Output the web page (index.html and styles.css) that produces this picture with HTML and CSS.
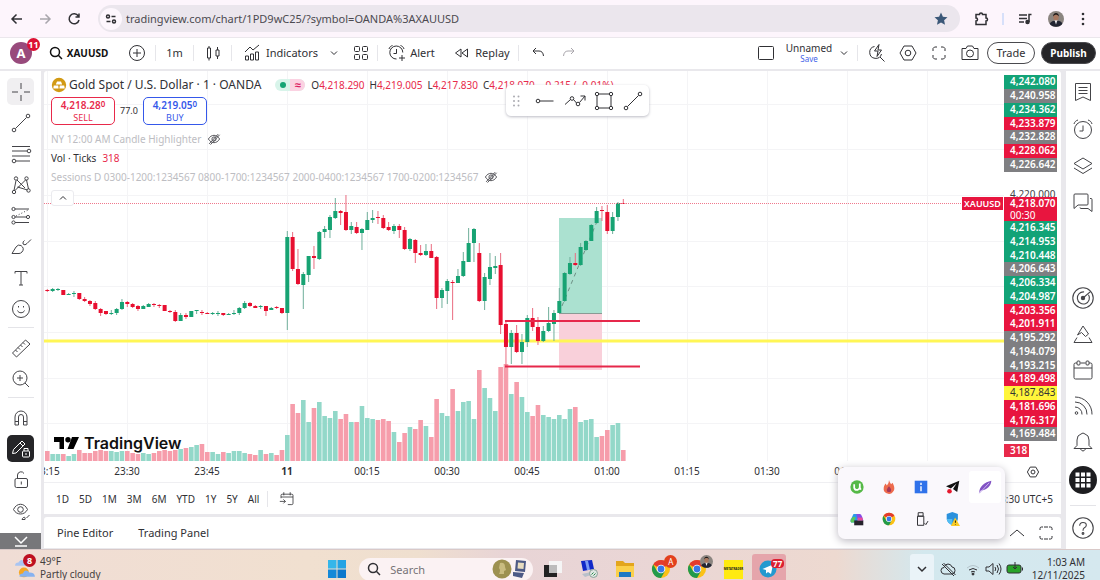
FILE: index.html
```html
<!DOCTYPE html>
<html lang="en">
<head>
<meta charset="utf-8">
<title>XAUUSD chart</title>
<link rel="stylesheet" href="styles.css">
</head>
<body>
<svg class="sprite" aria-hidden="true">
  <symbol id="chev-down" viewBox="0 0 20 20"><path d="M7 8.5l3 3 3-3"/></symbol>
  <symbol id="chev-up" viewBox="0 0 20 20"><path d="M7 11.5l3-3 3 3"/></symbol>
  <symbol id="trend" viewBox="0 0 20 20"><path d="M4.5 15.5l11-11"/><circle cx="3" cy="17" r="1.8"/><circle cx="17" cy="3" r="1.8"/></symbol>
  <symbol id="hex" viewBox="0 0 20 20"><path d="M6 3h8l4 7-4 7H6l-4-7z"/><circle cx="10" cy="10" r="2.8"/></symbol>
  <symbol id="eye-off" viewBox="0 0 20 20"><path d="M2 10c4-7 12-7 16 0-4 7-12 7-16 0zM3 17L16 3M5 18L18 4"/><circle cx="10" cy="10" r="3"/></symbol>
  <symbol id="search" viewBox="0 0 20 20"><circle cx="9" cy="9" r="4.500"/><path d="M12.300 12.300l3.700 3.700"/></symbol>
  <symbol id="corners" viewBox="0 0 20 20"><path d="M4 8V5.500L5.500 4H8M12 4h2.500L16 5.500V8M16 12v2.500L14.500 16H12M8 16H5.500L4 14.500V12"/></symbol>
  <symbol id="clock-alarm" viewBox="0 0 20 20"><circle cx="10" cy="11" r="8.500"/><path d="M10 6.500V12H6.500M1 5c.5-2 2-3.500 4-4M19 5c-.5-2-2-3.500-4-4"/></symbol>
  <symbol id="chrome" viewBox="0 0 20 20"><g stroke="none"><circle cx="10" cy="10" r="9" fill="#fbc116"/><path d="M10 10L2.200 5.500A9 9 0 0 1 17.800 5.500z" fill="#e33b2e"/><path d="M2.200 5.500A9 9 0 0 0 10 19l3.900-6.700L6 12z" fill="#229a4b"/><circle cx="10" cy="10" r="4.300" fill="#fff"/><circle cx="10" cy="10" r="3.400" fill="#3978e6"/></g></symbol>
  <symbol id="portrait" viewBox="0 0 20 20"><g stroke="none"><circle cx="10" cy="10" r="10" fill="#8b8580"/><path d="M2 16c2-5 14-6 16 0-3 5-13 5-16 0z" fill="#222532"/><path d="M8 11h4l-2 6z" fill="#e9e9ec"/><ellipse cx="10" cy="7.500" rx="3.400" ry="4.400" fill="#a87860"/><path d="M6.400 7C6 1 14 1 13.600 7 12 4 8 4 6.400 7z" fill="#1b1818"/></g></symbol>
</svg>

<div class="app">
  <div class="browser">
    <button class="nav" aria-label="Back"><svg class="i bold"><path d="M15 10H5M9.500 5.500L5 10l4.500 4.500"/></svg></button>
    <button class="nav faded" aria-label="Forward"><svg class="i bold"><path d="M4 10h10M9.500 5.500L14 10l-4.500 4.500"/></svg></button>
    <button class="nav" aria-label="Reload"><svg class="i bold"><path d="M13.300 7A5 5 0 1 0 14 11M14 4.500V8h-3.500"/></svg></button>
    <div class="address">
      <button class="site" aria-label="Site information"><svg class="i bold"><circle cx="7" cy="7.500" r="1.500"/><path d="M10.500 7.500h4M5.500 12.500h4"/><circle cx="13" cy="12.500" r="1.500"/></svg></button>
      <input class="url" aria-label="Address" value="tradingview.com/chart/1PD9wC25/?symbol=OANDA%3AXAUUSD">
      <button class="star" aria-label="Bookmark"><svg class="i"><path fill="#3b5878" stroke="none" d="M10 3.500l1.900 4.200 4.600.5-3.400 3.100.9 4.500-4-2.300-4 2.300.9-4.500-3.400-3.100 4.600-.5z"/></svg></button>
    </div>
    <button class="ext" aria-label="Extensions"><svg class="i bold"><path d="M5 5.500h3.500c0-2 3-2 3 0H15V9c2 0 2 3 0 3v3.500H5V12c2 0 2-3 0-3z"/></svg></button>
    <span class="split"></span>
    <button class="media" aria-label="Media"><svg class="i bold"><path d="M4 6h8M4 9.500h8M4 13h5M14 13V5.500h2.500"/><circle cx="12.500" cy="13" r="1.500" fill="currentColor"/></svg></button>
    <button class="me" aria-label="Profile"><svg class="i s16"><use href="#portrait"/></svg></button>
    <button class="more" aria-label="Menu"><svg class="i"><g fill="currentColor" stroke="none"><circle cx="10" cy="5" r="1.300"/><circle cx="10" cy="10" r="1.300"/><circle cx="10" cy="15" r="1.300"/></g></svg></button>
  </div>

  <header class="header">
    <button class="avatar" aria-label="Account, 11 notifications">A<span class="badge">11</span></button>
    <button class="symbol"><svg class="i bold"><use href="#search"/></svg>XAUUSD</button>
    <button class="cell" aria-label="Compare"><svg class="i"><circle cx="10" cy="10" r="7.500"/><path d="M10 6v8M6 10h8"/></svg></button>
    <span class="vr"></span>
    <button class="cell">1m</button>
    <span class="vr"></span>
    <button class="cell" aria-label="Candles"><svg class="i"><path d="M4.500 5h3v10h-3zM6 3v2M6 15v2.500M13 7h3v6h-3zM14.500 4v3M14.500 13v3"/></svg></button>
    <span class="vr"></span>
    <button class="label indicators"><svg class="i"><path d="M3.500 17v-4h3v4zM8.500 17v-6h3v6zM13.500 17v-8h3v8zM3 9l5-5 3 3 6-5"/></svg>Indicators</button>
    <button class="small" aria-label="Favourite indicators"><svg class="i"><use href="#chev-down"/></svg></button>
    <button class="templates" aria-label="Templates"><svg class="i"><rect x="3.500" y="3.500" width="5" height="5" rx="1"/><rect x="11.500" y="3.500" width="5" height="5" rx="1"/><rect x="3.500" y="11.500" width="5" height="5" rx="1"/><rect x="11.500" y="11.500" width="5" height="5" rx="1"/></svg></button>
    <span class="vr"></span>
    <button class="label alert"><svg class="i"><path d="M15.800 9.500A6.500 6.500 0 1 0 9.500 16M9.500 6v4.500H6.500M2 6c.5-2 2-3 3.500-3.500M17 6c-.5-2-2-3-3.500-3.500M15 12v6M12 15h6"/></svg>Alert</button>
    <button class="label replay"><svg class="i"><path d="M9 6v8l-5.500-4zM15.500 6v8L10 10z"/></svg>Replay</button>
    <span class="vr"></span>
    <button class="cell" aria-label="Undo"><svg class="i"><path d="M8 5L5 8l3 3M5 8h6q4 0 4.500 5"/></svg></button>
    <button class="small redo faded" aria-label="Redo"><svg class="i"><path d="M12 5l3 3-3 3M15 8H9q-4 0-4.500 5"/></svg></button>
    <span class="grow"></span>
    <button class="small layout" aria-label="Layout"><svg class="i"><rect x="2.500" y="3.500" width="15" height="13" rx="1"/></svg></button>
    <button class="unnamed">Unnamed<small>Save</small></button>
    <button class="small" aria-label="Layouts menu"><svg class="i"><use href="#chev-down"/></svg></button>
    <span class="vr"></span>
    <button class="tool" aria-label="Quick search"><svg class="i"><path d="M7.500 3.500a6 6 0 1 0 7 7.500M13 14l4.500 4.500M12 1.500L7.500 8H11l-1 5.500L14.500 7H11z"/></svg></button>
    <button class="tool" aria-label="Settings"><svg class="i"><use href="#hex"/></svg></button>
    <button class="tool" aria-label="Fullscreen"><svg class="i"><use href="#corners"/></svg></button>
    <button class="tool" aria-label="Snapshot"><svg class="i"><path d="M2 5.500h4L7.500 3h5L14 5.500h4v11H2z"/><circle cx="10" cy="10.500" r="3.500"/></svg></button>
    <button class="pill trade">Trade</button>
    <button class="pill publish">Publish</button>
  </header>

  <div class="work">
    <aside class="left" aria-label="Drawing tools">
      <div class="set">
        <button class="draw on" aria-label="Cross"><svg class="i"><path d="M10 1v6M10 13v6M1 10h6M13 10h6"/></svg></button>
        <button class="draw" aria-label="Trend line"><svg class="i"><use href="#trend"/></svg></button>
        <button class="draw" aria-label="Fib retracement"><svg class="i"><path d="M1 2.500h18M1 7h15M1 12h18M5 17h14"/><circle cx="18" cy="7" r="1.800"/><circle cx="3" cy="17" r="1.800"/></svg></button>
        <button class="draw" aria-label="Patterns"><svg class="i"><path d="M3 15.500L5 5.500M6 5l8 8M15 4.500l-8 8M15.500 5l2 9M4 15.500l4-4M6.500 12l10 3"/><circle cx="3" cy="17" r="1.700"/><circle cx="5" cy="3.500" r="1.700"/><circle cx="15.500" cy="3.500" r="1.700"/><circle cx="17.500" cy="15.500" r="1.700"/></svg></button>
        <button class="draw" aria-label="Forecasting"><svg class="i"><path d="M4 3h14M4 11h12M4 16.500h14"/><path d="M5 10l12-6" stroke-dasharray="1 2"/><circle cx="2.500" cy="3" r="1.600"/><circle cx="2.500" cy="11" r="1.600"/><circle cx="17" cy="11" r="1.600"/><circle cx="2.500" cy="16.500" r="1.600"/></svg></button>
        <button class="draw" aria-label="Brush"><svg class="i"><path d="M1 16.500L5 10q2-3 5-1.500 4 3 1 6.500-1.500 1.500-3 1.500zM13.500 3.500q-2 1-1.500 3.500 2 2 4-.5l4-4"/></svg></button>
        <button class="draw" aria-label="Text"><svg class="i"><path d="M4 5.500V3.500h12v2M10 3.500V17M8 17h4"/></svg></button>
        <button class="draw" aria-label="Icons"><svg class="i"><circle cx="10" cy="10" r="8.500"/><path d="M6.500 11.500c1 3 6 3 7 0M7.500 7v1.500M12.500 7v1.500"/></svg></button>
      </div>
      <hr>
      <div class="set">
        <button class="draw" aria-label="Measure"><svg class="i"><path d="M1.500 15l13-13 4.500 4-13.500 13zM4.500 12l2 2M7 9.500l2 2M9.500 7l2 2M12 4.500l2 2"/></svg></button>
        <button class="draw" aria-label="Zoom in"><svg class="i"><circle cx="9" cy="9" r="7"/><path d="M14 14l4 4M9 6v6M6 9h6"/></svg></button>
      </div>
      <hr>
      <div class="set">
        <button class="draw" aria-label="Magnet"><svg class="i"><path d="M4 17V9a6 6 0 0 1 12 0v8h-3.500V9a2.500 2.500 0 0 0-5 0v8zM4 13.500h3.500M12.500 13.500H16"/></svg></button>
        <button class="draw dark" aria-label="Stay in drawing mode"><svg class="i"><path d="M1.500 14.500l1-4 8.500-8.500 3 3-9 9zM9 4l3 3"/><rect x="11.500" y="12" width="7" height="6" rx="1"/><path d="M13 12v-2.500h4V12M15 14v2"/></svg></button>
        <button class="draw" aria-label="Lock"><svg class="i"><rect x="4" y="8.500" width="12.500" height="9" rx="1.500"/><path d="M6.500 8.500V5a3.500 3.500 0 0 1 6.500-1.500M10.300 11.500v3"/></svg></button>
        <button class="draw" aria-label="Hide drawings"><svg class="i"><path d="M2.500 8.500c3-7 11-7 14 0-3 6-11 6-14 0z"/><circle cx="9.500" cy="8.500" r="2.800"/><path d="M11 18.500c1-3 4-3 3 0zM15.500 17l3-3"/></svg></button>
      </div>
      <button class="collapse" aria-label="Scroll down"><svg class="i"><path d="M4 6l6 6 6-6M4 15h12" stroke-width="1.500"/></svg></button>
    </aside>

    <main class="center">
      <section class="chart">
        <div class="pane">
          <svg id="plot" class="plot" role="img" aria-label="One minute gold price candles with volume"></svg>
          <div class="legend">
            <div class="row title">
              <svg class="i s16" viewBox="0 0 20 20"><circle cx="10" cy="10" r="9" fill="#d29a14" stroke="none"/><path d="M7.500 5.500h5l1.500 4H6zM3.500 10.500h5.500l.5 4H2.800zM11 10.500h5.500l.7 4h-6.700z" fill="#fff" stroke="none"/></svg>
              <h1>Gold Spot / U.S. Dollar · 1 · OANDA</h1>
              <span class="status"><b></b><i>≈</i></span>
              <span class="ohlc"><span>O<em>4,218.290</em></span><span>H<em>4,219.005</em></span><span>L<em>4,217.830</em></span><span>C<em>4,218.070</em></span><em>−0.215 (−0.01%)</em></span>
            </div>
            <div class="row quotes">
              <button class="quote sell"><b>4,218.28<sup>0</sup></b>SELL</button>
              <span>77.0</span>
              <button class="quote buy"><b>4,219.05<sup>0</sup></b>BUY</button>
            </div>
            <div class="row study muted">NY 12:00 AM Candle Highlighter<svg class="i s14"><use href="#eye-off"/></svg></div>
            <div class="row study">Vol · Ticks <em>318</em></div>
            <div class="row study muted">Sessions D 0300-1200:1234567 0800-1700:1234567 2000-0400:1234567 1700-0200:1234567<svg class="i s14"><use href="#eye-off"/></svg></div>
            <button class="fold" aria-label="Hide indicator legend"><svg class="i"><use href="#chev-up"/></svg></button>
          </div>
          <div class="favorites">
            <svg class="i grip"><g fill="#aaaab0" stroke="none"><circle cx="8" cy="5.500" r="1"/><circle cx="12.500" cy="5.500" r="1"/><circle cx="8" cy="10" r="1"/><circle cx="12.500" cy="10" r="1"/><circle cx="8" cy="14.500" r="1"/><circle cx="12.500" cy="14.500" r="1"/></g></svg>
            <button aria-label="Horizontal ray"><svg class="i"><circle cx="3" cy="10" r="1.800"/><path d="M5 10h13.500"/></svg></button>
            <button aria-label="Path"><svg class="i"><path d="M0 13.500l5.500-5M8.500 8.500l3 3.500M14.500 11.500L20 5M15.500 5H20v4.500"/><circle cx="7" cy="7.500" r="1.800"/><circle cx="13" cy="13" r="1.800"/></svg></button>
            <button aria-label="Rectangle"><svg class="i"><path d="M5 3h10M5 17h10M3 5v10M17 5v10"/><circle cx="3" cy="3" r="1.700"/><circle cx="17" cy="3" r="1.700"/><circle cx="3" cy="17" r="1.700"/><circle cx="17" cy="17" r="1.700"/></svg></button>
            <button aria-label="Trend line"><svg class="i"><use href="#trend"/></svg></button>
          </div>
          <div class="brand"><svg class="mark" viewBox="0 0 25 13"><path d="M0 0h10v12H5.500V5H0zM18 0h7l-5.500 12H13.500z"/><circle cx="14" cy="2.800" r="2.700"/></svg>TradingView</div>
          <span class="ticker">XAUUSD</span>
        </div>
        <div class="scale">
          <div class="tags top">
            <span class="g">4,242.080</span><span class="n">4,240.958</span><span class="g">4,234.362</span><span class="r">4,233.879</span><span class="n">4,232.828</span><span class="r">4,228.062</span><span class="n">4,226.642</span>
          </div>
          <span class="tick">4,220.000</span>
          <div class="last"><b>4,218.070</b>00:30</div>
          <div class="tags rest">
            <span class="g">4,216.345</span><span class="g">4,214.953</span><span class="g">4,210.448</span><span class="n">4,206.643</span><span class="g">4,206.334</span><span class="g">4,204.987</span><span class="r">4,203.356</span><span class="r">4,201.911</span><span class="n">4,195.292</span><span class="n">4,194.079</span><span class="n">4,193.215</span><span class="r">4,189.498</span><span class="y">4,187.843</span><span class="r">4,181.696</span><span class="r">4,176.317</span><span class="n">4,169.484</span>
          </div>
          <span class="vol">318</span>
        </div>
        <div class="times"><span>23:15</span><span>23:30</span><span>23:45</span><b>11</b><span>00:15</span><span>00:30</span><span>00:45</span><span>01:00</span><span>01:15</span><span>01:30</span><span>01:45</span></div>
        <button class="axis" aria-label="Axis settings"><svg class="i s14"><use href="#hex"/></svg></button>
        <div class="ranges">
          <button>1D</button><button>5D</button><button>1M</button><button>3M</button><button>6M</button><button>YTD</button><button>1Y</button><button>5Y</button><button>All</button>
          <span class="vr"></span>
          <button aria-label="Go to date"><svg class="i s16" viewBox="0 0 20 20"><path d="M2.500 9V5.500q0-1.500 1.500-1.500h12q1.500 0 1.500 1.500v10q0 1.500-1.500 1.500h-5M2.500 7.500h15M6 1.500v4M14 1.500v4M1 13h7M5.500 10.500L8 13l-2.500 2.500"/></svg></button>
          <button class="zone">01:03:30 UTC+5</button>
        </div>
      </section>
      <section class="tabs">
        <button>Pine Editor</button><button>Trading Panel</button>
        <span class="grow"></span>
        <button aria-label="Open panel"><svg class="i"><path d="M3 13l7-6 7 6"/></svg></button>
        <button aria-label="Maximise panel"><svg class="i"><path d="M4 7V5.500Q4 4 5.500 4H7M13 4h1.500Q16 4 16 5.500V7M16 13v1.500q0 1.500-1.500 1.500H13M7 16H5.500Q4 16 4 14.500V13M8 4h4M8 16h4"/></svg></button>
      </section>
    </main>

    <aside class="right" aria-label="Widgets">
      <div class="widgets">
        <button aria-label="Watchlist"><svg class="i"><path d="M2.500 1.500h15v17l-7.500-3.500-7.500 3.500zM5.500 5.500h9M5.500 8.500h9M5.500 11.500h9"/></svg></button>
        <button aria-label="Alerts"><svg class="i"><use href="#clock-alarm"/></svg></button>
        <button aria-label="Object tree"><svg class="i"><path d="M10 2l9 5.500-9 5.500-9-5.500zM1 12l9 5.500 9-5.500"/></svg></button>
        <button aria-label="Chats"><svg class="i"><path d="M2 1h12q1 0 1 1v9q0 1-1 1H5l-4 3.500V2q0-1 1-1zM17 5.500h1q1 0 1 1V18.500L15 15.500H8q-1 0-1-1"/></svg></button>
      </div>
      <div class="widgets lower">
        <button aria-label="Screeners"><svg class="i big" viewBox="0 0 20 20"><circle cx="10" cy="10" r="9.300"/><path d="M15 7a5.500 5.500 0 1 1-4-2.500M10 10l7-6"/><circle cx="10" cy="10" r="1.500" fill="currentColor"/></svg></button>
        <button aria-label="Pine"><svg class="i"><path d="M4 13.500l-3 5h18l-3-5M4.500 11L10 2l5.500 8-3 2.500-4-4z"/></svg></button>
        <button aria-label="Calendar"><svg class="i"><path d="M4 3H2.500Q1 3 1 4.500v13Q1 19 2.500 19h15q1.500 0 1.500-1.500v-13Q19 3 17.500 3H16M7.500 3h5M1 8h18"/><rect x="4" y="1" width="3" height="4" rx="1"/><rect x="13" y="1" width="3" height="4" rx="1"/></svg></button>
        <button aria-label="News"><svg class="i"><circle cx="3.500" cy="17" r="1.300"/><path d="M2 11a7 7 0 0 1 7 7.500M2 6a12 12 0 0 1 12 12.500M2 1a17 17 0 0 1 17 17.500"/></svg></button>
        <button aria-label="Notifications"><svg class="i"><path d="M1 16.500l3-3V8q0-5 4-6 2-2 4 0 4 1 4 6v5.500l3 3zM7.500 17q2.500 4 5 0"/></svg></button>
        <button class="apps" aria-label="Products"><svg class="i" viewBox="0 0 20 20"><g><rect x="2.500" y="2.500" width="4" height="4"/><rect x="8" y="2.500" width="4" height="4"/><rect x="13.500" y="2.500" width="4" height="4"/><rect x="2.500" y="8" width="4" height="4"/><rect x="8" y="8" width="4" height="4"/><rect x="13.500" y="8" width="4" height="4"/><rect x="2.500" y="13.500" width="4" height="4"/><rect x="8" y="13.500" width="4" height="4"/><rect x="13.500" y="13.500" width="4" height="4"/></g></svg></button>
      </div>
      <hr>
      <div class="widgets">
        <button aria-label="Help"><svg class="i big" viewBox="0 0 20 20"><circle cx="10" cy="10" r="9.300"/><path d="M7 8q0-3 3-3t3 2.500q0 1.500-2 2.500-1 .5-1 2.500"/><circle cx="10" cy="15" r=".8"/></svg></button>
      </div>
    </aside>
  </div>

  <footer class="taskbar">
    <button class="weather"><svg class="i big" viewBox="0 0 20 20"><path d="M1 8q0-3 3-3 2-4 5-1 3 0 3 4z" fill="#a9c5f2" stroke="none"/><circle cx="9" cy="14" r="4.500" fill="#f5a623" stroke="none"/><path d="M5 18q0-3 3-3 2-5 6-1 5 0 5 4z" fill="#86b2f0" stroke="none"/></svg><span class="badge">8</span><span class="two">49°F<small>Partly cloudy</small></span></button>
    <div class="dock">
      <button aria-label="Start"><svg class="i"><g fill="#1489d8" stroke="none"><path d="M1 1h8.500v8.500H1z" fill="#35b6ea"/><path d="M10.500 1H19v8.500h-8.500z" fill="#24a3e4"/><path d="M1 10.500h8.500V19H1z"/><path d="M10.500 10.500H19V19h-8.500z" fill="#0b78cc"/></g></svg></button>
      <label class="find"><svg class="i bold"><use href="#search"/></svg><input placeholder="Search" aria-label="Search"><svg class="i medal" viewBox="0 0 36 20"><circle cx="10" cy="10" r="9.500" fill="#9d9150"/><path d="M8 4q5-1 5 4l1 3-2 1v3H7q2-4 0-6z" fill="#c9bc80"/><path d="M24 1l10 1-1 11-10-1zM21 13l11 1-2 5-9-2z" fill="#4d5a86"/><path d="M26 3.500l6 .5-.5 6-6-.5z" fill="#e7dcc0"/></svg></label>
      <button aria-label="Task view"><svg class="i"><g stroke="none"><path d="M1 6h13v12H1z" fill="#222"/><path d="M6 2h13v12H6z" fill="#f5f5f5"/><path d="M6 6h8v8H6z" fill="#bcbcbc"/></g></svg></button>
      <button aria-label="Remote desktop"><svg class="i"><g stroke="none"><path d="M2 2l11-1 2 9-11 2z" fill="#1128c8"/><path d="M6 2h3l2 9H8z" fill="#7c9cf5"/><path d="M3 15l9-2 3 2-9 3z" fill="#b9c0ca"/></g><circle cx="14.500" cy="14.500" r="4" fill="#dfe6e3" stroke="#8aa39a"/><path d="M12.500 15.500l2-2M14.500 16.500l2-2" stroke="#268a4b"/></svg></button>
      <button aria-label="File Explorer"><svg class="i"><g stroke="none"><path d="M1 2h7l2 2h9v14H1z" fill="#e3a51d"/><path d="M1 7h18v11H1z" fill="#fbd04b"/><path d="M4 18v-5h12v5z" fill="#1d78c4"/></g></svg></button>
      <button aria-label="Chrome"><svg class="i"><use href="#chrome"/></svg><span class="mini a">A</span></button>
      <button aria-label="Chrome, second profile"><svg class="i"><use href="#chrome"/></svg><svg class="i mini"><use href="#portrait"/></svg></button>
      <button aria-label="Metatrader"><span class="yellow">METATRADER</span></button>
      <button class="active" aria-label="Telegram"><svg class="i"><circle cx="9" cy="10" r="8.500" fill="#2499cf" stroke="none"/><path d="M3.500 10L14 5.500 12 15l-3-2-2 1.500V11z" fill="#fff" stroke="none"/></svg><span class="count">77</span></button>
    </div>
    <div class="status-area">
      <button class="up" aria-label="Hidden icons"><svg class="i bold"><path d="M6 8l4 4 4-4"/></svg></button>
      <svg class="i cloud"><path d="M6 15q-3-.5-3-3.500t3-3q1-3.500 4-3.500t4 3q3 0 3 3.500T14 15zM4 5l12 12M5.500 4l12 12"/></svg>
      <svg class="i wifi"><path d="M4 9q6-5 12 0" stroke="#b5c5cc"/><path d="M6 11q4-3 8 0M8 13q2-1.500 4 0"/><circle cx="10" cy="15" r="1" fill="currentColor"/></svg>
      <svg class="i"><path d="M3 8h3l4-3.500v11L6 12H3zM12 8q1.500 2 0 4M14 6q3 4 0 8M16 4.500q4 5.500 0 11"/></svg>
      <svg class="i battery"><rect x="2" y="6" width="14" height="8" rx="2" fill="#29a329"/><path d="M17.500 8.500v3M10 3v7M8 8l2 2 2-2"/></svg>
      <span class="clock">1:03 AM<br>12/11/2025</span>
    </div>
  </footer>

  <div class="tray">
    <button aria-label="uTorrent"><svg class="i s14" viewBox="0 0 20 20"><circle cx="10" cy="10" r="9.500" fill="#55b947" stroke="none"/><path d="M6 6v5q1 4 5 3 3-1 3-4V5M14 10q0 3 2 3" stroke="#fff" stroke-width="2.500"/></svg></button>
    <button aria-label="Flame"><svg class="i s14" viewBox="0 0 20 20"><path d="M10 0q1 4 3 6l2-2q4 7 2 11-3 5-7 5t-7-4Q1 11 5 5l2 3q3-3 3-8z" fill="#ed6b4d" stroke="none"/><path d="M10 9q5 5 2 8H8q-3-3 2-8z" fill="#a5385b" stroke="none"/></svg></button>
    <button aria-label="Information"><svg class="i s14" viewBox="0 0 20 20"><path d="M1 1h18v18H1z" fill="#2f72ea" stroke="none"/><path d="M10 4v3M10 9v7" stroke="#fff" stroke-width="2"/></svg></button>
    <button aria-label="Telegram"><svg class="i s14" viewBox="0 0 20 20"><path d="M0 9l19-8-3 16-6-4 5-8-8 7z" fill="#111" stroke="none"/><circle cx="5" cy="16" r="3.300" fill="#e5192d" stroke="none"/></svg></button>
    <button class="lit" aria-label="Feather"><svg class="i s14" viewBox="0 0 20 20"><path d="M2 19C1 9 10 3 19 1c0 7-6 13-15 14z" fill="#8253c4" stroke="none"/><path d="M2 19L16 4" stroke="#cdb6ef"/></svg></button>
    <button aria-label="Copilot"><svg class="i s14" viewBox="0 0 20 20"><g stroke="none"><path d="M5 3h8l-3 12H3q-3 0-2-4z" fill="#2b9be8"/><path d="M9 3h5q2 0 3 3l2 6h-8z" fill="#874be5"/><path d="M4 7h4l-2 8H3q-3 0-2-4z" fill="#5ac85a"/><path d="M6 12h13v7H6z" fill="#26222c"/><path d="M11 8h7v4h-7z" fill="#ea4c97"/></g></svg></button>
    <button aria-label="Chrome"><svg class="i s14"><use href="#chrome"/></svg></button>
    <button aria-label="USB"><svg class="i s14" viewBox="0 0 20 20"><path d="M5 6h9v13H5zM6 1h7v5H6zM15 16l2 2 3-5"/></svg></button>
    <button aria-label="Windows Security"><svg class="i s14" viewBox="0 0 20 20"><path d="M9 0l8 3v7q-1 6-8 9-7-3-8-9V3z" fill="#2a91dd" stroke="none"/><path d="M9 0v19q-7-3-8-9h8z" fill="#51bdf2" stroke="none"/><path d="M13 8l7 12H7z" fill="#fbcb25" stroke="none"/><path d="M13.500 12v3.500M13.500 17v1" stroke="#3a3000" stroke-width="1.500"/></svg></button>
  </div>
</div>
<script src="chart.js"></script>
</body>
</html>
```

FILE: styles.css
```css
* { box-sizing: border-box; }
body { margin: 0; font: 11px/14px "Noto Sans", sans-serif; color: #303034; }
button, input { font: inherit; color: inherit; border: 0; background: none; padding: 0; margin: 0; }
button { display: flex; align-items: center; justify-content: center; flex: none; white-space: nowrap; }
input { outline: 0; min-width: 0; }
em { font-style: normal; color: #e8294a; }
hr { border: 0; height: 1px; width: 26px; margin: 6px auto; background: #e4e4e8; flex: none; }
.sprite { position: absolute; width: 0; height: 0; }
.i { width: 20px; height: 20px; flex: none; fill: none; stroke: currentColor; stroke-width: 1; overflow: visible; }
.i.bold { stroke-width: 1.5; }
.s16 { width: 16px; height: 16px; }
.s14 { width: 14px; height: 14px; stroke-width: 1.4; }
.big { width: 22px; height: 22px; }
.faded { color: #a9a6ac; }
.grow { flex: 1; }
.vr { width: 1px; height: 16px; background: #e6e6ea; flex: none; }

.app { position: relative; display: flex; flex-direction: column; height: 100vh; overflow: hidden; background: #e9e8ec; }

/* browser chrome */
.browser { display: flex; align-items: center; height: 38px; flex: none; background: #fdf5fc; padding-left: 6px; border-bottom: 1px solid #ebe7ec; }
.nav { width: 25px; }
.nav:first-child { width: 21px; }
.nav + .nav { margin-left: 6px; }
.nav + .nav + .nav { margin-left: 4px; }
.address { display: flex; align-items: center; flex: 1; height: 27px; margin-left: 11px; padding: 0 9px 0 2px; border-radius: 14px; background: #ebe6ed; }
.site { width: 22px; height: 22px; border-radius: 50%; background: #fdf7fd; }
.url { flex: 1; margin-left: 4px; color: #4c4a50; }
.ext { width: 42px; }
.split { width: 2px; height: 12px; background: #d7e0fa; }
.media { width: 42px; }
.me { width: 20px; }
.more { width: 34px; }

/* chart header */
.header { display: flex; align-items: center; height: 31px; flex: none; margin-bottom: 2px; padding: 0 4px 1px 0; background: #fff; }
.avatar { position: relative; width: 22px; height: 22px; margin: 0 10px; border-radius: 50%; background: #984a7c; color: #fff; font-size: 13px; font-weight: 700; }
.badge { position: absolute; top: -4px; right: -8px; min-width: 13px; height: 13px; border-radius: 7px; background: #dc1234; color: #fff; font: 700 9px/13px "Noto Sans", sans-serif; text-align: center; }
.symbol { width: 76px; gap: 1px; padding-right: 6px; font-size: 10px; font-weight: 700; color: #111; }
.cell { width: 37px; }
.templates { width: 33px; }
.label { gap: 4px; }
.indicators { width: 92px; padding-left: 4px; }
.small { width: 20px; }
.alert { width: 66px; gap: 3px; }
.replay { width: 74px; gap: 3px; }
.redo { width: 26px; }
.layout { margin-right: 8px; }
.unnamed { flex-direction: column; width: 50px; font-size: 10px; line-height: 12px; }
.unnamed small { font-size: 8px; line-height: 10px; color: #3f62e8; }
.small + .vr { margin: 0 3px; }
.tool { width: 31px; }
.pill { height: 22px; border-radius: 11px; border: 1px solid #4a4a4e; }
.trade { width: 48px; margin-left: 2px; }
.publish { width: 55px; margin-left: 6px; background: #252528; color: #fff; font-size: 10px; font-weight: 700; }

/* work area */
.work { display: flex; flex: 1; min-height: 0; }
.left { display: flex; flex-direction: column; width: 41px; margin-right: 3px; padding-top: 7px; background: #fff; color: #444448; }
.set { display: flex; flex-direction: column; align-items: center; gap: 4px; }
.draw { width: 27px; height: 27px; border-radius: 5px; }
.draw.on { background: #f0eff1; }
.draw.dark { background: #252528; color: #fff; }
.left hr { margin: 5px auto 6px; }
.collapse { height: 16px; margin-top: auto; background: #77777a; color: #fff; }
.center { display: flex; flex-direction: column; flex: 1; min-width: 0; gap: 3px; }
.chart { display: grid; grid-template: 1fr 22px 31px / 1fr 57px; flex: 1; min-height: 0; background: #fff; border-radius: 3px 3px 0 0; overflow: hidden; }
.pane { position: relative; min-width: 0; min-height: 0; overflow: hidden; }
.plot { display: block; width: 100%; height: 100%; }

/* legend over the price pane */
.legend { position: absolute; top: 5px; left: 7px; }
.row { display: flex; align-items: center; }
.title { height: 18px; }
.title h1 { margin: 0 0 0 2px; font-size: 12px; font-weight: 400; white-space: nowrap; }
.status { display: flex; margin: 0 6px 0 14px; height: 12px; width: 30px; border-radius: 6px; background: #d8f4ea; }
.status b { width: 6px; height: 6px; margin: 3px 4px 3px 5px; border-radius: 50%; background: #14a474; }
.status i { flex: 1; border-radius: 0 6px 6px 0; background: #fbd2e2; color: #dc1960; font: 700 11px/11px "Noto Sans", sans-serif; text-align: center; }
.ohlc { display: flex; gap: 5px; font-size: 10px; white-space: nowrap; }
.quotes { height: 28px; margin: 3px 0 4px; gap: 5px; font-size: 9px; }
.quote { flex-direction: column; width: 64px; height: 28px; border: 1px solid; border-radius: 5px; background: #fff; font-size: 9px; line-height: 11px; }
.quote b { font-size: 10px; line-height: 13px; font-weight: 600; }
.quote sup { font-size: 8px; line-height: 1px; vertical-align: 2px; }
.sell { color: #e8294a; }
.buy { color: #3558ea; }
.study { height: 19px; font-size: 10px; gap: 6px; white-space: nowrap; }
.muted { color: #bdbdc2; }
.muted .i { color: #55555a; }
.fold { width: 23px; height: 16px; margin-top: 4px; border: 1px solid #ebebef; border-radius: 3px; background: #fff; }
.favorites { position: absolute; top: 14px; left: 462px; display: flex; align-items: center; height: 31px; width: 143px; padding-right: 6px; justify-content: space-between; border-radius: 5px; background: #fff; box-shadow: 0 1px 3px #bcbcc4; }
.brand { position: absolute; left: 10px; bottom: 8px; display: flex; align-items: center; gap: 5px; font: 600 16px/20px Inter, sans-serif; color: #111; }
.mark { width: 25px; height: 13px; }
.ticker { position: absolute; right: 1px; top: 126px; width: 41px; background: #e8153f; color: #fff; font-size: 9px; font-weight: 600; line-height: 13px; text-align: center; }

/* price scale */
.scale { display: flex; flex-direction: column; padding: 4px 4px 0 0; font-size: 10px; font-weight: 600; color: #fff; }
.scale span { padding-left: 6px; }
.tags { display: flex; flex-direction: column; }
.tags span { flex: 1; line-height: 13px; min-height: 0; }
.top { height: 97px; }
.rest { height: 220px; }
.g { background: #12a377; }
.r { background: #e8153f; }
.n { background: #7f7f82; }
.y { background: #fff53b; color: #333; font-weight: 400; }
.scale .tick { height: 9px; margin-top: 16px; line-height: 13px; color: #444448; font-weight: 400; overflow: hidden; }
.last { height: 24px; padding-left: 6px; background: #e8153f; line-height: 12px; font-weight: 400; }
.last b { display: block; font-weight: 600; }
.scale .vol { width: 25px; height: 13px; margin-top: 3px; line-height: 13px; background: #e8294a; }

.times { display: flex; margin-left: -37px; overflow: hidden; clip-path: inset(0 0 0 37px); font-size: 10px; line-height: 20px; border-bottom: 1px solid #efeff2; }
.times > * { width: 80px; flex: none; text-align: center; }
.axis { border-bottom: 1px solid #efeff2; }
.ranges { grid-column: 1 / 3; display: flex; align-items: center; gap: 10px; padding: 0 8px 0 12px; font-size: 10px; }
.ranges .vr { margin: 0 1px 0 -2px; }
.zone { margin-left: auto; }
.tabs { display: flex; align-items: center; height: 31px; flex: none; gap: 9px; padding: 0 5px 0 13px; margin-bottom: 1px; background: #fff; border-radius: 3px 3px 0 0; }
.tabs button + button { margin-left: 16px; }
.tabs .grow + button + button { margin-left: 0; }

/* widget bar */
.right { width: 34px; margin-left: 5px; padding-top: 2px; background: #fff; color: #444448; }
.widgets button { width: 34px; height: 37px; }
.lower { margin-top: 59px; }
.right .lower button { height: 36px; }
.right .lower .apps { height: 40px; }
.right hr { margin: 5px auto 3px; }
.apps .i { width: 28px; height: 28px; padding: 4px; border-radius: 50%; background: #1d1d20; color: #fff; }
.apps g { fill: currentColor; stroke: none; }

/* taskbar */
.taskbar { display: flex; align-items: flex-start; justify-content: space-between; height: 31px; flex: none; border-top: 1px solid #d9c9c8; background: linear-gradient(90deg, #f0ddd5 0, #f1e0d0 28%, #efdfcf 38%, #e8d4d6 46%, #ead6d5 60%, #edd9d0 76%, #d3e8ee 84%, #d5e8ef 100%); font-size: 10px; line-height: 13px; }
.weather { position: relative; gap: 4px; padding: 5px 0 0 14px; color: #45403f; text-align: left; }
.weather .badge { top: 4px; left: 23px; right: auto; background: #bd1020; }
.two small { display: block; font-size: 10px; }
.dock { display: flex; align-items: center; gap: 2px; margin-left: 96px; padding-top: 5px; height: 33px; }
.dock button { position: relative; width: 34px; height: 30px; }
.dock .active { background: #e5a5ab; border-radius: 3px; }
.find { display: flex; align-items: center; width: 174px; height: 23px; margin: 0 1px 0 3px; padding: 0 5px; border-radius: 12px; background: #fbf2f3; }
.find input { flex: 1; width: 40px; margin-left: 6px; font-size: 11px; }
.find input::placeholder { color: #777277; opacity: 1; }
.find .medal { width: 36px; height: 20px; stroke: none; }
.dock .mini { position: absolute; top: 1px; right: 1px; width: 13px; height: 13px; border-radius: 50%; }
.a { background: #e2401d; color: #fff; font-size: 8px; line-height: 13px; text-align: center; }
.yellow { width: 19px; height: 19px; background: #ffea10; color: #222; font-size: 3px; font-weight: 700; line-height: 19px; }
.count { position: absolute; top: 5px; right: 2px; padding: 0 2px; border-radius: 4px; background: #dc1f30; color: #fff; font-size: 8px; font-weight: 700; line-height: 9px; }
.status-area { display: flex; align-items: center; height: 37px; padding-right: 15px; }
.up { width: 24px; height: 30px; background: #eaf3f8; border-radius: 3px; }
.cloud { margin: 0 5px 0 4px; }
.battery { margin-left: 2px; }
.clock { width: 60px; text-align: right; }
.tray { position: absolute; right: 95px; bottom: 41px; display: grid; grid-template-columns: repeat(5, 32px); grid-auto-rows: 32px; padding: 4px 3px; width: 167px; height: 72px; border-radius: 7px; background: #faf8fc; box-shadow: 0 2px 8px #bbb8c0; }
.tray .lit { background: #fff; border-radius: 3px; }
```

FILE: chart.js
```js
// One entry per minute: direction, body top, body bottom, high, low, volume height.
const bars = `
r 290 291 289 292 10|g 289 291 288 292 7|g 289 290 288 291 7|r 290 295 290 295 7|g 294 295 293 295 5|g 293 294 291 297 7
r 293 299 293 300 11|r 299 301 297 302 8|r 301 304 300 306 8|r 303 309 301 310 10|r 309 313 308 316 11|r 311 314 311 315 10
g 313 314 310 315 10|g 309 313 308 315 9|g 302 309 299 310 10|r 302 304 301 307 10|r 304 307 303 308 8|r 306 309 305 311 7
g 306 309 305 309 8|g 304 307 303 307 7|r 304 305 303 307 8|r 305 306 304 308 10|r 305 311 305 311 11|r 311 312 310 313 10
r 312 321 310 322 11|g 315 321 313 321 12|r 315 317 313 319 13|g 311 317 311 317 14|g 310 311 310 314 16|r 312 313 310 315 17
r 313 314 312 314 9|g 313 314 312 315 9|g 313 314 311 316 7|r 313 315 313 316 9|g 314 315 313 315 8|g 313 314 310 315 10
g 308 313 307 315 10|g 303 308 301 309 8|r 303 306 302 307 7|r 306 308 305 308 6|g 306 307 305 309 11|r 306 311 306 316 7
g 308 310 307 310 8|r 307 308 306 309 6|r 308 313 308 314 11|g 237 313 231 330 26|r 237 269 232 271 57|r 269 284 249 285 48
g 274 285 272 309 61|g 256 275 256 282 39|r 256 258 246 269 53|g 232 259 231 260 59|g 229 232 226 238 45|g 217 230 215 238 43
g 211 218 198 219 50|r 211 213 210 225 42|r 212 230 195 231 47|g 226 230 222 234 39|r 227 233 222 234 39|g 229 233 228 250 55
g 220 230 212 230 43|g 218 220 210 223 42|r 217 218 211 224 41|r 218 228 215 229 42|r 227 230 222 231 40|g 226 231 224 234 29
r 226 230 224 238 19|r 230 249 227 250 28|g 239 249 238 251 34|r 240 253 239 263 32|r 253 255 245 256 41|g 251 255 244 256 35
r 251 258 244 258 24|r 257 298 256 309 62|g 290 298 288 308 48|g 281 291 279 304 45|r 282 283 280 320 72|g 276 283 269 283 50
g 261 276 252 277 59|g 243 262 228 262 60|g 229 243 228 262 42|r 253 301 243 302 91|g 277 301 273 310 73|g 267 279 253 285 63
g 266 268 256 274 50|r 265 325 253 334 94|r 324 347 320 366 97|g 333 347 330 364 67|r 333 352 325 353 79|g 342 352 334 364 64
g 318 342 315 347 49|r 318 327 308 331 45|r 327 341 317 345 56|g 331 341 326 342 46|g 323 331 307 332 44|g 313 324 310 341 42
g 301 313 288 313 46|g 273 301 272 302 42|g 263 274 257 275 52|r 263 265 253 266 54|g 247 265 243 266 39|g 241 250 240 251 41
g 225 241 224 241 42|g 211 223 207 224 24|r 210 211 206 221 25|r 212 231 205 234 31|g 217 231 212 234 36|g 203 217 202 221 38
r 203 204 199 204 11`.trim().split(/[|\n]/).map(s => s.split(' '));

const candle = { g: '#17a373', r: '#e80f30' };
const wick = { g: '#6fae9a', r: '#ea6c80' };
const volume = { g: '#93d8c9', r: '#f69dab' };
const base = 461;

const rect = (x, y, w, h, fill) => `<rect x="${x}" y="${y}" width="${w}" height="${h}" fill="${fill}"/>`;
const line = (x1, y1, x2, y2, color, width = 1, extra = '') =>
  `<path d="M${x1} ${y1}L${x2} ${y2}" stroke="${color}" stroke-width="${width}" ${extra}/>`;

let out = '';
for (let y = 103.5; y < 460; y += 45.7) out += line(44, Math.round(y) + 0.5, 4000, Math.round(y) + 0.5, '#f4f4f6');
for (let x = 47.5; x < 4000; x += 80) out += line(x, 71, x, base, '#f4f4f6');

const at = i => 47.3 + i * 16 / 3;
bars.forEach(([d, , , , , v], i) => { out += rect(at(i) - 2.3, base - v, 4.6, v, volume[d]); });

// long position: target and stop zones
out += rect(559, 218, 43, 96, '#abe1d0') + rect(559, 314, 43, 56, '#f9d0da');
out += line(559, 313.5, 602, 313.5, '#8a9a94');
out += line(562, 306, 598, 219, '#6d8f84', 1, 'stroke-dasharray="4 4"');

out += line(44, 341, 4000, 341, '#fff655', 3);
bars.forEach(([d, top, bottom, high, low], i) => {
  out += line(at(i), high, at(i), low, wick[d]);
  out += rect(at(i) - 2, top, 4, Math.max(1, bottom - top), candle[d]);
});
out += line(505, 321, 640, 321, '#e6284b', 2) + line(505, 366.5, 640, 366.5, '#e6284b', 2);
out += line(44, 203.5, 4000, 203.5, '#f0788c', 1, 'stroke-dasharray="1 1"');

document.getElementById('plot').innerHTML = `<g transform="translate(-44 -71)">${out}</g>`;
```
